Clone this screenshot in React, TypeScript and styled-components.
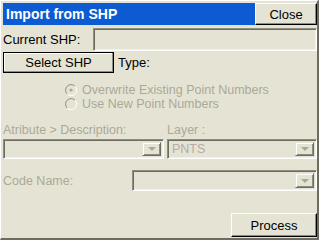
import React from 'react';
import styled, { createGlobalStyle } from 'styled-components';

const GlobalStyle = createGlobalStyle`
  html, body {
    margin: 0;
    padding: 0;
    background: #e5e4d4;
  }
  * {
    box-sizing: border-box;
  }
`;

const face = '#e5e4d4';
const shadow = '#8f8d80';
const darkShadow = '#6e6c61';
const disabledText = '#aba898';

const Window = styled.div`
  width: 319px;
  height: 240px;
  background: ${face};
  border-top: 1px solid #fff;
  border-left: 1px solid #fff;
  border-right: 2px solid ${darkShadow};
  border-bottom: 2px solid ${darkShadow};
  padding: 2px 0 0 2px;
  display: flex;
  flex-direction: column;
  font-family: 'Liberation Sans', Arial, sans-serif;
  font-size: 13px;
  color: #000;
`;

const TitleRow = styled.div`
  display: flex;
  height: 22px;
`;

const TitleBar = styled.div`
  flex: 1;
  background: #0c5bd2;
  color: #fff;
  font-weight: bold;
  font-size: 14px;
  display: flex;
  align-items: center;
  padding-left: 3px;
`;

const Button = styled.button<{ $w: number; $h: number; $default?: boolean }>`
  width: ${p => p.$w}px;
  height: ${p => p.$h}px;
  background: ${face};
  font-family: inherit;
  font-size: 13px;
  color: #000;
  padding: 0;
  margin: 0;
  border: 1px solid ${p => (p.$default ? '#000' : '#fff')};
  border-right-color: #000;
  border-bottom-color: #000;
  box-shadow: inset -1px -1px ${shadow}, inset 1px 1px ${p => (p.$default ? '#fff' : face)};
  display: flex;
  align-items: center;
  justify-content: center;
`;

const Row = styled.div<{ $mt: number; $h: number }>`
  display: flex;
  align-items: center;
  margin-top: ${p => p.$mt}px;
  height: ${p => p.$h}px;
`;

const Label = styled.span<{ $w?: number; $disabled?: boolean }>`
  width: ${p => (p.$w ? `${p.$w}px` : 'auto')};
  flex-shrink: 0;
  color: ${p => (p.$disabled ? disabledText : '#000')};
  font-size: ${p => (p.$disabled ? '12.5px' : '13px')};
`;

const Sunken = styled.div<{ $w?: number }>`
  ${p => (p.$w ? `width: ${p.$w}px;` : 'flex: 1;')}
  height: 100%;
  background: ${face};
  border: 1px solid;
  border-color: ${shadow} #fff #fff ${shadow};
  box-shadow: inset 1px 1px ${darkShadow}, inset -1px -1px #f2f1e6;
  display: flex;
  align-items: center;
  padding: 2px;
`;

const ComboText = styled.span`
  flex: 1;
  padding-left: 2px;
  font-size: 12.5px;
  color: #b8aaa8;
`;

const DropButton = styled.div`
  width: 19px;
  height: 100%;
  background: ${face};
  border: 1px solid;
  border-color: ${face} ${darkShadow} ${darkShadow} ${face};
  box-shadow: inset 1px 1px #fff, inset -1px -1px ${shadow};
  display: flex;
  align-items: center;
  justify-content: center;
  margin-left: auto;
`;

const Arrow = styled.div`
  width: 0;
  height: 0;
  border-left: 4px solid transparent;
  border-right: 4px solid transparent;
  border-top: 4px solid ${disabledText};
`;

const Combo = ({ text, w }: { text?: string; w?: number }) => (
  <Sunken $w={w}>
    {text && <ComboText>{text}</ComboText>}
    <DropButton>
      <Arrow />
    </DropButton>
  </Sunken>
);

const RadioGroup = styled.div`
  display: flex;
  flex-direction: column;
  gap: 1px;
  margin-top: 10px;
  padding-left: 62px;
`;

const RadioRow = styled.label`
  display: flex;
  align-items: center;
  height: 13px;
  gap: 5px;
  color: ${disabledText};
  font-size: 12.5px;
`;

const Radio = ({ checked }: { checked?: boolean }) => (
  <svg width="12" height="12" viewBox="0 0 12 12">
    <path d="M10 2.2 A5 5 0 0 0 2.2 10" fill="none" stroke={shadow} strokeWidth="1" />
    <path d="M2.2 10 A5 5 0 0 0 10 2.2" fill="none" stroke="#fff" strokeWidth="1" />
    <circle cx="6" cy="6" r="4" fill={face} />
    {checked && <circle cx="6" cy="6" r="1.6" fill={disabledText} />}
  </svg>
);

const TwoCols = styled.div<{ $mt: number; $h: number }>`
  display: grid;
  grid-template-columns: 161px 1fr;
  column-gap: 3px;
  margin-top: ${p => p.$mt}px;
  height: ${p => p.$h}px;
  align-items: center;
`;

const Footer = styled.div`
  display: flex;
  justify-content: flex-end;
  margin-top: auto;
  padding-bottom: 1px;
`;

export default function App() {
  return (
    <>
      <GlobalStyle />
      <Window>
        <TitleRow>
          <TitleBar>Import from SHP</TitleBar>
          <Button $w={62} $h={22}>Close</Button>
        </TitleRow>
        <Row $mt={3} $h={23}>
          <Label $w={90}>Current SHP:</Label>
          <Sunken />
        </Row>
        <Row $mt={1} $h={21}>
          <Button $w={111} $h={21} $default>Select SHP</Button>
          <Label style={{ marginLeft: 4 }}>Type:</Label>
        </Row>
        <RadioGroup>
          <RadioRow>
            <Radio checked />
            Overwrite Existing Point Numbers
          </RadioRow>
          <RadioRow>
            <Radio />
            Use New Point Numbers
          </RadioRow>
        </RadioGroup>
        <TwoCols $mt={13} $h={14}>
          <Label $disabled>Atribute &gt; Description:</Label>
          <Label $disabled>Layer :</Label>
        </TwoCols>
        <TwoCols $mt={2} $h={20}>
          <Combo />
          <Combo text="PNTS" />
        </TwoCols>
        <Row $mt={11} $h={21}>
          <Label $w={129} $disabled>Code Name:</Label>
          <Combo />
        </Row>
        <Footer>
          <Button $w={86} $h={24}>Process</Button>
        </Footer>
      </Window>
    </>
  );
}
